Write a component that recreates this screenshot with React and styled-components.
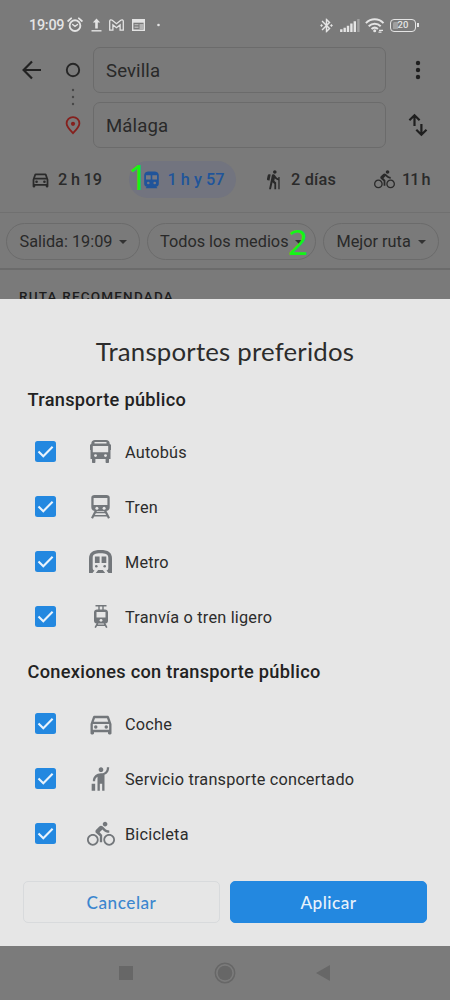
import React from 'react'
import styled, { createGlobalStyle } from 'styled-components'
import { MdOutlineDirectionsCar, MdDirectionsBike, MdHiking, MdHail, MdBluetoothConnected } from 'react-icons/md'

const GlobalStyle = createGlobalStyle`
  * { box-sizing: border-box; }
  body { margin: 0; background: #7b7b7b; font-family: Roboto, "Liberation Sans", sans-serif; }
  svg { display: block; flex: none; }
  button { font: inherit; }
`

const Screen = styled.div`
  width: 450px;
  height: 1000px;
  display: flex;
  flex-direction: column;
  overflow: hidden;
`

/* ---- dimmed page behind the sheet ---- */

const Page = styled.div`
  height: 299px;
  overflow: hidden;
  position: relative;
  background: #7a7a7a;
  color: #292929;
`

const StatusBar = styled.div`
  height: 47px;
  padding: 3px 31px 0 29px;
  display: flex;
  align-items: center;
  color: #e4e4e4;
`

const Clock = styled.span`
  width: 38px;
  font-size: 14.4px;
  font-weight: 500;
  letter-spacing: -0.25px;
`

const StatusGroup = styled.div`
  display: flex;
  align-items: center;
  gap: ${p => p.$gap}px;
  margin-left: ${p => p.$right ? 'auto' : 0};
`

const Search = styled.div`
  height: 100px;
  display: grid;
  grid-template-columns: 53px 40px 293px 64px;
`

const Side = styled.div`
  display: flex;
  flex-direction: column;
  align-items: center;
  gap: ${p => p.$gap || 0}px;
  padding-top: ${p => p.$top}px;
  padding-left: ${p => p.$left || 0}px;
`

const Fields = styled.div`
  display: flex;
  flex-direction: column;
  gap: 9px;
`

const Field = styled.div`
  height: 46px;
  padding: 1px 0 0 12px;
  display: flex;
  align-items: center;
  border: 1.5px solid #6b6b6b;
  border-radius: 7px;
  font-size: 18.6px;
  letter-spacing: 0.1px;
`

const Modes = styled.div`
  height: 66px;
  padding: 14px 0 0 15px;
  display: flex;
  border-bottom: 1px solid #707070;
`

const Mode = styled.div`
  height: 37px;
  width: ${p => p.$width}px;
  padding-left: ${p => p.$pad}px;
  display: flex;
  align-items: center;
  gap: ${p => p.$gap}px;
  border-radius: 19px;
  font-size: 16.3px;
  font-weight: 500;
  letter-spacing: ${p => p.$track || 0}px;
  white-space: nowrap;
  color: ${p => p.$active ? '#20549a' : '#2a2a2a'};
  background: ${p => p.$active ? '#72747f' : 'transparent'};
`

const Chips = styled.div`
  height: 57px;
  padding: 10px 6px 0;
  display: flex;
  gap: 7px;
  border-bottom: 2px solid #6b6b6b;
`

const Chip = styled.div`
  width: ${p => p.$width}px;
  height: 37px;
  padding: 0 12px 0 12.5px;
  display: flex;
  align-items: center;
  justify-content: space-between;
  border: 1.5px solid #6b6b6b;
  border-radius: 19px;
  font-size: 16.3px;
  white-space: nowrap;
`

const Caret = styled.i`
  border: 4.5px solid transparent;
  border-top-color: #333;
  border-bottom: 0;
`

const Recommended = styled.div`
  padding: 18px 19px 0;
  font-size: 13.5px;
  line-height: 16px;
  font-weight: 500;
  letter-spacing: 1.2px;
  color: #1d1d1d;
`

// step number written over the page
const Step = styled.span`
  position: absolute;
  left: ${p => p.$x}px;
  top: ${p => p.$y}px;
  font-family: "Noto Sans", "Open Sans", sans-serif;
  font-weight: 400;
  font-size: 35px;
  line-height: 40px;
  color: #14f514;
`

/* ---- sheet ---- */

const Sheet = styled.div`
  height: 647px;
  padding: 35px 23px 0;
  background: #e6e6e6;
  color: #2c2c2c;
`

const Title = styled.h1`
  margin: 0;
  height: 34px;
  line-height: 34px;
  text-align: center;
  font-family: Lato, sans-serif;
  font-weight: 400;
  font-size: 25.8px;
  letter-spacing: 0.2px;
`

const Section = styled.h2`
  margin: ${p => p.$top}px 0 0 4.5px;
  height: 26px;
  line-height: 26px;
  font-size: 18.2px;
  font-weight: 500;
  letter-spacing: 0.3px;
  color: #222;
`

const List = styled.div`
  padding: 11px 0 1px;
`

const Row = styled.label`
  height: 55px;
  padding-left: 12px;
  display: grid;
  grid-template-columns: 45px 41px 1fr;
  align-items: center;
`

const Box = styled.span`
  width: 21px;
  height: 21px;
  border-radius: 2.5px;
  background: #2388e0;
`

const RowIcon = styled.span`
  width: 41px;
  display: flex;
  justify-content: center;
  color: #73777b;
`

const RowText = styled.span`
  padding: 2px 0 0 4px;
  font-size: 16.3px;
  letter-spacing: 0.2px;
`

const Actions = styled.div`
  display: flex;
  gap: 10px;
  padding-top: 19px;
`

const Action = styled.button`
  flex: 1;
  height: 42px;
  padding: 0;
  border: 1.5px solid ${p => p.$primary ? '#2388e0' : '#d8dadc'};
  border-radius: 5px;
  background: ${p => p.$primary ? '#2388e0' : 'transparent'};
  color: ${p => p.$primary ? '#e8f2fb' : '#3c86cf'};
  font-family: Lato, sans-serif;
  font-weight: 500;
  font-size: 17.2px;
  letter-spacing: 0.5px;
`

const NavBar = styled.div`
  height: 54px;
  padding: 0 120px 0 119px;
  display: flex;
  align-items: center;
  justify-content: space-between;
  background: #7b7b7b;
`

/* ---- drawings ---- */

const Svg = ({ w, h, box, children }) => (
  <svg width={w} height={h} viewBox={box || `0 0 ${w} ${h}`} fill="none">{children}</svg>
)

const Alarm = () => (
  <Svg w={16} h={16} box="0 0 17 17">
    <g stroke="currentColor" strokeLinecap="round">
      <circle cx="8.5" cy="9.2" r="5.7" strokeWidth="2" />
      <path d="M1.2 4.2 4.4 1.4M15.8 4.2 12.6 1.4" strokeWidth="1.9" />
      <path d="m6 8 2.5 2L11.2 8" strokeWidth="1.5" />
    </g>
  </Svg>
)

const Upload = () => (
  <Svg w={11} h={14}>
    <path d="M.5 12.8h10" stroke="currentColor" strokeWidth="1.4" />
    <path d="M5.5.5 1.8 4.6h2.4v5.8h2.6V4.6h2.4z" fill="currentColor" />
  </Svg>
)

const Mail = () => (
  <Svg w={15} h={12}>
    <path d="M.7 11.2V2.3C.7.8 2.2.4 3.2 1.2l4.3 3.5 4.3-3.5c1-.8 2.5-.4 2.5 1.1v8.9h-3.2V5.9L7.5 8.7 3.9 5.9v5.3z" stroke="currentColor" strokeWidth="1.3" />
  </Svg>
)

const News = () => (
  <Svg w={13} h={12}>
    <path d="M.7.8h11.6v10.4H.7z" stroke="currentColor" strokeWidth="1.4" />
    <path d="M0 0h13v3.7H0z" fill="currentColor" />
    <path d="M2.5 5.6h4M2.5 8.3h4" stroke="#b4b4b4" strokeWidth="1.4" />
    <path d="M7.5 5H12v5H7.5z" fill="#b4b4b4" />
  </Svg>
)

const Signal = () => (
  <Svg w={20} h={13}>
    <path d="M1.3 10.2V13M4.7 8.7V13M8 6.7V13M11.4 4.6V13M14.8 2.3V13" stroke="currentColor" strokeWidth="2.4" />
    <path d="M18.4 0v13" stroke="#a0a0a0" strokeWidth="2.4" />
  </Svg>
)

const Wifi = () => (
  <Svg w={20} h={15}>
    <g stroke="currentColor" strokeWidth="2">
      <path d="M.9 5.1C6 .1 13.4.1 18.5 5.1M3.7 8.3c3.5-3.3 8.6-3.3 12 0M6.5 11c2-1.7 4.5-1.7 6.4 0" />
    </g>
    <circle cx="9.7" cy="12.8" r="1.5" fill="currentColor" />
    <path d="M14 12.3h4M13.5 14.2h3" stroke="currentColor" strokeWidth="1.2" />
  </Svg>
)

const BatteryShell = styled.span`
  width: 26px;
  height: 13px;
  margin-right: 3px;
  display: flex;
  align-items: center;
  justify-content: center;
  border: 1.6px solid currentColor;
  border-radius: 4px;
  font-size: 9.5px;
  font-weight: 500;
  line-height: 10px;
  background: linear-gradient(90deg, #a0a0a0 5px, transparent 5px) content-box;
  padding: 1.5px;
  position: relative;
  &::after {
    content: '';
    position: absolute;
    right: -4px;
    top: 3px;
    width: 2px;
    height: 4px;
    background: currentColor;
  }
`

const Back = () => (
  <Svg w={20} h={20}>
    <path d="M19 10H2M10 1.5 1.6 10l8.4 8.5" stroke="#222" strokeWidth="2.2" />
  </Svg>
)

const Origin = () => (
  <Svg w={16} h={16}><circle cx="8" cy="8" r="6.2" stroke="#262626" strokeWidth="1.9" /></Svg>
)

const Dots = () => (
  <Svg w={4} h={18}>
    <g fill="#484848"><circle cx="2" cy="2" r="1.2" /><circle cx="2" cy="9" r="1.2" /><circle cx="2" cy="16" r="1.2" /></g>
  </Svg>
)

const Pin = () => (
  <Svg w={16} h={19}>
    <path d="M8 17.2C4.4 13.5 1.6 10.7 1.6 7.500a6.400 6.400 0 0 1 12.800 0C14.400 10.700 11.600 13.500 8 17.200z" stroke="#85201d" strokeWidth="1.8" />
    <circle cx="8" cy="7.8" r="2.1" fill="#85201d" />
  </Svg>
)

const More = () => (
  <Svg w={6} h={20}>
    <g fill="#1f1f1f"><circle cx="3" cy="3" r="2.2" /><circle cx="3" cy="10" r="2.2" /><circle cx="3" cy="17" r="2.2" /></g>
  </Svg>
)

const Swap = () => (
  <Svg w={20} h={24}>
    <path d="M6.5 13V2.5M1.4 7.3l5.1-5 5.1 5M13.4 11v10.5M8.3 16.7l5.1 5 5.1-5" stroke="#1f1f1f" strokeWidth="2.2" />
  </Svg>
)

const Transit = () => (
  <Svg w={15} h={18}>
    <path d="M4 .5h7c2.6.5 3.800 1.700 3.800 3.800v8.500c0 1.700-1.100 2.800-2.600 2.900l1 1.100v.4H1.800v-.4l1-1.100C1.300 15.600.2 14.500.2 12.800V4.300C.2 2.200 1.400 1 4 .5z" fill="currentColor" />
    <path d="M2 4.200h4.700v4.300H2zM8.300 4.200H13v4.300H8.300z" fill="#767984" />
    <circle cx="4.300" cy="12" r="1.300" fill="#767984" /><circle cx="10.700" cy="12" r="1.300" fill="#767984" />
  </Svg>
)

const Bus = () => (
  <Svg w={21} h={23}>
    <path d="M5 0h11c2.3 0 3.600 1.300 3.700 3.500V4l1.300.7V10h-.5v9h-1.500v3c0 .6-.4 1-1 1h-1.400c-.6 0-1-.4-1-1v-3H5.400v3c0 .6-.4 1-1 1H3c-.6 0-1-.4-1-1v-3H.5v-9H0V4.700L1.300 4v-.5C1.400 1.300 2.700 0 5 0z" fill="currentColor" />
    <path d="M4.500 2h12v1.500h-12zM2.800 6h15.400v6.200H2.800z" fill="#e6e6e6" />
    <circle cx="5.500" cy="15.600" r="1.400" fill="#e6e6e6" /><circle cx="15.500" cy="15.600" r="1.400" fill="#e6e6e6" />
  </Svg>
)

const Train = () => (
  <Svg w={19} h={24}>
    <path d="M3.5 0h12c2 0 3.200 1 3.200 2.800V12c0 2.500-1.500 4-3.800 4H4.100C1.800 16 .3 14.500.3 12V2.800C.3 1 1.500 0 3.500 0z" fill="currentColor" />
    <path d="M2.600 3h13.800v7H2.600z" fill="#e6e6e6" />
    <circle cx="5.900" cy="13.200" r="1.500" fill="#e6e6e6" /><circle cx="13.100" cy="13.200" r="1.500" fill="#e6e6e6" />
    <path d="m5 15.500-4 7.700M14 15.500l4 7.700" stroke="currentColor" strokeWidth="2.2" />
    <path d="M4.500 17.500h10M2.500 20.800h14" stroke="currentColor" strokeWidth="1.6" />
  </Svg>
)

const Metro = () => (
  <Svg w={23} h={23}>
    <path d="M0 23V8.500C0 2.500 4 0 11.500 0S23 2.500 23 8.500V23z" fill="currentColor" />
    <path d="M3.700 18V7.800c0-3.400 2.600-4.500 7.800-4.500s7.800 1.100 7.800 4.500V18c0 1.400-.6 2.200-1.800 2.500l2 2.500h-3.300l-2.400-3H9.200l-2.400 3H3.500l2-2.500c-1.200-.3-1.800-1.100-1.800-2.500z" fill="#e6e6e6" />
    <path d="M5.900 6.600h4.700v6.500H5.900zM12.600 6.600h4.700v6.500h-4.700z" fill="currentColor" />
    <circle cx="7.300" cy="16.300" r="1.300" fill="currentColor" /><circle cx="15.700" cy="16.300" r="1.300" fill="currentColor" />
  </Svg>
)

const Tram = () => (
  <Svg w={16} h={23}>
    <path d="M2.500.8h11M6 1v4M10 1v4" stroke="currentColor" strokeWidth="1.4" />
    <path d="M4 4.400h8c1.800 0 2.800.9 3 2.800v8.600c0 1.600-1 2.700-2.600 2.700H3.600C2 18.500 1 17.400 1 15.800V7.200c.2-1.900 1.200-2.800 3-2.800z" fill="currentColor" />
    <path d="M3.500 7h9v5.500h-9z" fill="#e6e6e6" />
    <circle cx="8" cy="15.300" r="1.400" fill="#e6e6e6" />
    <path d="m4.700 18-2.500 4.700M11.300 18l2.500 4.700M4 20.300h8" stroke="currentColor" strokeWidth="1.6" />
  </Svg>
)

const Check = () => (
  <Svg w={21} h={21}><path d="m3.500 10.500 4.800 4.700L17.600 5.700" stroke="#e9f3fc" strokeWidth="2.1" /></Svg>
)

const transports = [
  { label: 'Autobús', icon: <Bus /> },
  { label: 'Tren', icon: <Train /> },
  { label: 'Metro', icon: <Metro /> },
  { label: 'Tranvía o tren ligero', icon: <Tram /> },
]

const connections = [
  { label: 'Coche', icon: <MdOutlineDirectionsCar size={28} /> },
  { label: 'Servicio transporte concertado', icon: <MdHail size={28} /> },
  { label: 'Bicicleta', icon: <MdDirectionsBike size={28} /> },
]

const Options = ({ items }) => (
  <List>
    {items.map(item => (
      <Row key={item.label}>
        <Box><Check /></Box>
        <RowIcon>{item.icon}</RowIcon>
        <RowText>{item.label}</RowText>
      </Row>
    ))}
  </List>
)

export default function App() {
  return (
    <Screen>
      <GlobalStyle />
      <Page>
        <StatusBar>
          <Clock>19:09</Clock>
          <StatusGroup $gap={7.5}>
            <Alarm /><Upload /><Mail /><News />
            <Svg w={16} h={4}><circle cx="6.5" cy="2" r="1.3" fill="currentColor" /></Svg>
          </StatusGroup>
          <StatusGroup $gap={5} $right>
            <MdBluetoothConnected size={17} />
            <Signal />
            <Wifi />
            <BatteryShell>20</BatteryShell>
          </StatusGroup>
        </StatusBar>

        <Search>
          <Side $top={13} $left={11}><Back /></Side>
          <Side $top={15}>
            <Origin />
            <Side $top={10}><Dots /></Side>
            <Side $top={10}><Pin /></Side>
          </Side>
          <Fields>
            <Field>Sevilla</Field>
            <Field>Málaga</Field>
          </Fields>
          <Side $top={13} $gap={33}><More /><Swap /></Side>
        </Search>

        <Modes>
          <Mode $width={114} $pad={15} $gap={7} $track={-0.2}><MdOutlineDirectionsCar size={21} />2 h 19</Mode>
          <Mode $width={107} $pad={14.5} $gap={9} $active><Transit />1 h y 57</Mode>
          <Mode $width={124} $pad={27} $gap={7} $track={0.2}><MdHiking size={21} />2 días</Mode>
          <Mode $width={80} $pad={14} $gap={7} $track={-1}><MdDirectionsBike size={21} />11 h</Mode>
        </Modes>

        <Chips>
          <Chip $width={133.5}>Salida: 19:09<Caret /></Chip>
          <Chip $width={169.5}>Todos los medios<Caret /></Chip>
          <Chip $width={115.5}>Mejor ruta<Caret /></Chip>
        </Chips>
        <Recommended>RUTA RECOMENDADA</Recommended>

        <Step $x={128} $y={157}>1</Step>
        <Step $x={288} $y={222}>2</Step>
      </Page>

      <Sheet>
        <Title>Transportes preferidos</Title>
        <Section $top={19}>Transporte público</Section>
        <Options items={transports} />
        <Section $top={14}>Conexiones con transporte público</Section>
        <Options items={connections} />
        <Actions>
          <Action>Cancelar</Action>
          <Action $primary>Aplicar</Action>
        </Actions>
      </Sheet>

      <NavBar>
        <Svg w={14} h={14}><path d="M0 0h14v14H0z" fill="#676767" /></Svg>
        <Svg w={22} h={22}>
          <circle cx="11" cy="11" r="9.7" stroke="#676767" strokeWidth="1.5" />
          <circle cx="11" cy="11" r="7.3" fill="#676767" />
        </Svg>
        <Svg w={14} h={16}><path d="M14 0v16L0 8z" fill="#676767" /></Svg>
      </NavBar>
    </Screen>
  )
}
